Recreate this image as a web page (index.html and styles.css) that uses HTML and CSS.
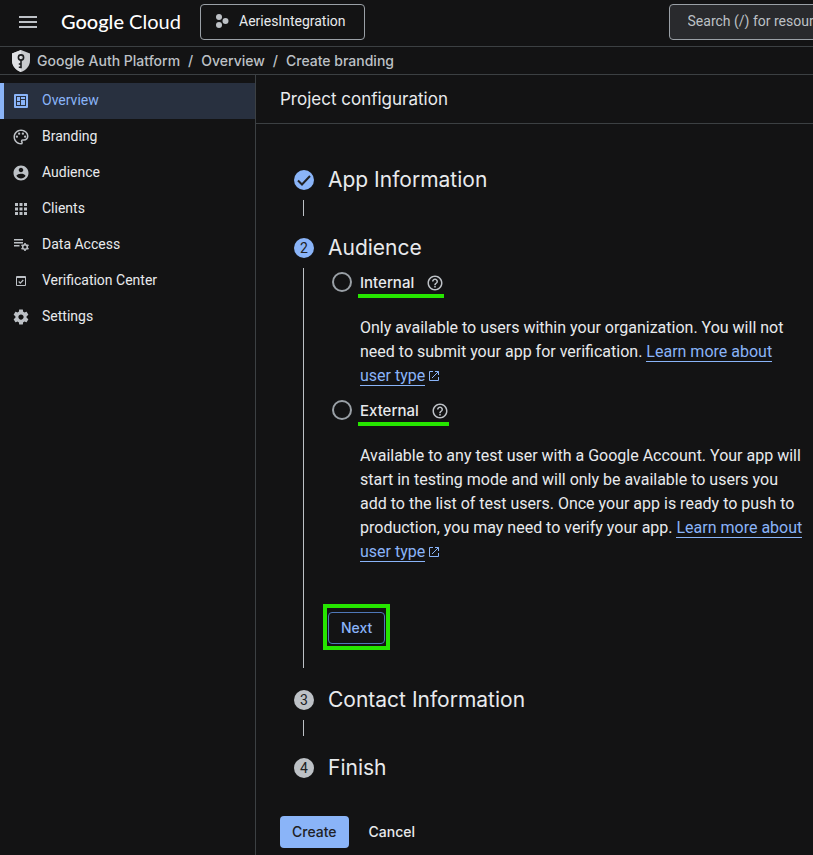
FILE: index.html
```html
<!DOCTYPE html>
<html lang="en">
<head>
<meta charset="utf-8">
<meta name="viewport" content="width=device-width, initial-scale=1">
<title>Create branding – Google Auth Platform</title>
<link rel="stylesheet" href="styles.css">
</head>
<body>
<svg class="sprite" aria-hidden="true">
  <symbol id="help" viewBox="0 0 24 24"><path d="M11 18h2v-2h-2v2zm1-16C6.480 2 2 6.480 2 12s4.480 10 10 10 10-4.480 10-10S17.520 2 12 2zm0 18c-4.410 0-8-3.590-8-8s3.590-8 8-8 8 3.590 8 8-3.590 8-8 8zm0-14c-2.210 0-4 1.790-4 4h2c0-1.100.9-2 2-2s2 .9 2 2c0 2-3 1.750-3 5h2c0-2.250 3-2.500 3-5 0-2.210-1.790-4-4-4z"/></symbol>
  <symbol id="open" viewBox="0 0 14 14"><path fill="none" stroke="currentColor" d="M6 2.500H2.500v9h9V8M8 2.500h3.500V6M11.500 2.500L5 9"/></symbol>
</svg>

<header class="topbar">
  <button class="menu" type="button" aria-label="Main menu">
    <svg viewBox="0 0 18 12"><path d="M0 0h18v2H0zM0 5h18v2H0zM0 10h18v2H0z"/></svg>
  </button>
  <a class="logo" href="#"><b>Google</b> Cloud</a>
  <button class="project" type="button">
    <svg viewBox="0 0 14 14"><circle cx="4" cy="3" r="3"/><circle cx="4" cy="11" r="3"/><circle cx="10.500" cy="7" r="3"/></svg>
    AeriesIntegration
  </button>
  <input class="search" type="search" aria-label="Search" placeholder="Search (/) for resources, docs, products, and more">
</header>

<nav class="crumbs" aria-label="Breadcrumb">
  <svg class="shield" viewBox="0 0 18 22">
    <path fill="#c9cbce" d="M9 0l9 3.500v7c0 5.200-3.700 9.900-9 11.500-5.300-1.600-9-6.300-9-11.500v-7z"/>
    <path fill="#dfe1e4" d="M9 0L0 3.500v7C0 15.700 3.700 20.400 9 22z"/>
    <circle cx="9" cy="7.500" r="2.600" fill="none" stroke="#1b1c1e" stroke-width="1.600"/>
    <path fill="none" stroke="#1b1c1e" stroke-width="1.600" d="M9 10v8.200M9 14H6.800M9 17.300H6.800"/>
  </svg>
  <a href="#">Google Auth Platform</a><span>/</span><a href="#">Overview</a><span>/</span><a href="#">Create branding</a>
</nav>

<div class="shell">
  <nav class="sidebar" aria-label="Google Auth Platform">
    <a class="item active" href="#">
      <svg viewBox="0 0 18 18"><path fill-rule="evenodd" d="M3 2h12a1 1 0 0 1 1 1v12a1 1 0 0 1-1 1H3a1 1 0 0 1-1-1V3a1 1 0 0 1 1-1zm1 2v10h10V4zM5 5h3v4H5zM9 5h4v2H9zM9 8h4v5H9zM5 10h3v3H5z"/></svg>
      Overview</a>
    <a class="item" href="#">
      <svg viewBox="0 0 24 24"><path d="M12 22C6.490 22 2 17.510 2 12S6.490 2 12 2s10 4.040 10 9c0 3.310-2.690 6-6 6h-1.770c-.28 0-.5.220-.5.500 0 .12.050.230.130.330.410.470.640 1.060.640 1.670A2.500 2.500 0 0 1 12 22zm0-18c-4.410 0-8 3.590-8 8s3.590 8 8 8c.28 0 .5-.22.500-.5a.54.540 0 0 0-.14-.35c-.41-.46-.63-1.050-.63-1.650a2.500 2.500 0 0 1 2.500-2.500H16c2.210 0 4-1.790 4-4 0-3.860-3.590-7-8-7z"/><circle cx="6.500" cy="11.500" r="1.500"/><circle cx="9.500" cy="7.500" r="1.500"/><circle cx="14.500" cy="7.500" r="1.500"/><circle cx="17.500" cy="11.500" r="1.500"/></svg>
      Branding</a>
    <a class="item" href="#">
      <svg viewBox="0 0 24 24"><path d="M12 2C6.480 2 2 6.480 2 12s4.480 10 10 10 10-4.480 10-10S17.520 2 12 2zm0 3c1.660 0 3 1.340 3 3s-1.340 3-3 3-3-1.340-3-3 1.340-3 3-3zm0 14.200c-2.500 0-4.710-1.280-6-3.220.03-1.990 4-3.080 6-3.080 1.990 0 5.970 1.090 6 3.080-1.290 1.940-3.500 3.220-6 3.220z"/></svg>
      Audience</a>
    <a class="item" href="#">
      <svg viewBox="0 0 18 18"><path d="M3 3h3v3H3zM7.500 3h3v3h-3zM12 3h3v3h-3zM3 7.500h3v3H3zM7.500 7.500h3v3h-3zM12 7.500h3v3h-3zM3 12h3v3H3zM7.500 12h3v3h-3zM12 12h3v3h-3z"/></svg>
      Clients</a>
    <a class="item" href="#">
      <svg viewBox="0 0 18 18"><path d="M2 3h9v1.500H2zM2 6h9v1.500H2zM2 9h5.500v1.500H2z"/><circle cx="13" cy="11" r="2.300" fill="none" stroke="currentColor" stroke-width="1.500"/><path fill="none" stroke="currentColor" stroke-width="1.600" d="M13 7v1.500M13 13.500V15M9.500 9l1.300.8M15.200 12.200l1.300.8M9.500 13l1.300-.8M15.200 9.800l1.300-.8"/></svg>
      Data Access</a>
    <a class="item" href="#">
      <svg viewBox="0 0 18 18"><path fill-rule="evenodd" d="M5 4h8a1 1 0 0 1 1 1v8a1 1 0 0 1-1 1H5a1 1 0 0 1-1-1V5a1 1 0 0 1 1-1zm0 2v7h8V6z"/><path fill="none" stroke="currentColor" stroke-width="1.200" d="M6.700 9.500l1.600 1.600 3-3.100"/></svg>
      Verification Center</a>
    <a class="item" href="#">
      <svg viewBox="0 0 24 24"><path d="M19.430 12.980c.04-.32.070-.64.070-.98s-.03-.66-.07-.98l2.110-1.650c.19-.15.240-.42.120-.64l-2-3.460c-.12-.22-.39-.3-.61-.22l-2.490 1c-.52-.4-1.080-.73-1.690-.98l-.38-2.650C14.460 2.180 14.250 2 14 2h-4c-.25 0-.46.180-.49.420l-.38 2.650c-.61.250-1.170.590-1.690.980l-2.490-1c-.23-.09-.49 0-.61.220l-2 3.460c-.13.220-.07.490.120.640l2.110 1.650c-.04.320-.07.650-.07.980s.03.660.070.980l-2.110 1.650c-.19.150-.24.420-.12.640l2 3.460c.12.220.390.300.610.220l2.490-1c.52.400 1.080.730 1.690.980l.38 2.650c.03.240.240.420.490.420h4c.25 0 .46-.18.490-.42l.38-2.650c.61-.25 1.170-.59 1.690-.98l2.490 1c.23.090.490 0 .61-.22l2-3.460c.12-.22.070-.49-.12-.64l-2.110-1.650zM12 15.500c-1.930 0-3.500-1.570-3.500-3.500s1.570-3.500 3.500-3.500 3.500 1.570 3.500 3.500-1.570 3.500-3.500 3.500z"/></svg>
      Settings</a>
  </nav>

  <main class="main">
    <h1 class="title">Project configuration</h1>
    <form class="stepper">
      <section class="step">
        <h2 class="head"><span class="dot done"><svg viewBox="0 0 20 20" role="img" aria-label="Done"><path d="M4 10.500l4 4 8-8.500"/></svg></span>App Information</h2>
        <div class="body"></div>
      </section>
      <section class="step">
        <h2 class="head"><span class="dot current">2</span>Audience</h2>
        <div class="body options">
          <div class="option">
            <input type="radio" name="audience" id="internal">
            <div class="name marked"><label for="internal">Internal</label><svg class="help" role="img" aria-label="Help"><use href="#help"/></svg></div>
            <p>Only available to users within your organization. You will not need to submit your app for verification. <a href="#">Learn more about user type</a><svg class="open" aria-hidden="true"><use href="#open"/></svg></p>
          </div>
          <div class="option">
            <input type="radio" name="audience" id="external">
            <div class="name marked"><label for="external">External</label><svg class="help" role="img" aria-label="Help"><use href="#help"/></svg></div>
            <p>Available to any test user with a Google Account. Your app will start in testing mode and will only be available to users you add to the list of test users. Once your app is ready to push to production, you may need to verify your app. <a href="#">Learn more about user type</a><svg class="open" aria-hidden="true"><use href="#open"/></svg></p>
          </div>
          <div class="highlight"><button class="next" type="button">Next</button></div>
        </div>
      </section>
      <section class="step">
        <h2 class="head"><span class="dot">3</span>Contact Information</h2>
        <div class="body"></div>
      </section>
      <section class="step">
        <h2 class="head"><span class="dot">4</span>Finish</h2>
      </section>
      <div class="actions">
        <button class="create" type="button">Create</button>
        <button class="cancel" type="button">Cancel</button>
      </div>
    </form>
  </main>
</div>
</body>
</html>
```
FILE: styles.css
```css
:root {
  --bg: #131314;
  --line: #3c4043;
  --text: #e8eaed;
  --muted: #bdc1c6;
  --blue: #8ab4f8;
  --mark: #26e600;
  --ui: Roboto, "Liberation Sans", sans-serif;
  --display: "Google Sans", Inter, Roboto, sans-serif;
}

* { box-sizing: border-box; }

body {
  margin: 0;
  min-height: 100vh;
  display: flex;
  flex-direction: column;
  overflow-x: hidden;
  background: var(--bg);
  color: var(--text);
  font: 14px/20px var(--ui);
}

button, input { font: inherit; color: inherit; }
button { cursor: pointer; }
a { color: inherit; text-decoration: none; }
svg { display: block; fill: currentColor; flex: none; }
.sprite { position: absolute; width: 0; height: 0; }

.topbar {
  display: flex;
  align-items: flex-start;
  height: 47px;
  padding: 4px 0 0 16px;
  overflow: hidden;
  border-bottom: 1px solid var(--line);
}
.menu {
  display: grid;
  place-items: center;
  flex: none;
  width: 24px;
  height: 36px;
  padding: 0;
  border: 0;
  background: none;
  color: var(--muted);
}
.menu svg { width: 18px; height: 12px; }
.logo {
  flex: 0 0 139px;
  margin-left: 21px;
  font: 20px/34px "Google Sans", Lato, sans-serif;
  color: #fff;
  white-space: nowrap;
}
.logo b { font-weight: 500; }
.project {
  display: flex;
  align-items: center;
  gap: 10px;
  flex: none;
  height: 36px;
  padding: 0 18px 2px 14px;
  border: 1px solid #9aa0a6;
  border-radius: 4px;
  background: none;
}
.project svg { width: 14px; height: 14px; color: var(--muted); }
.search {
  flex: 1 0 480px;
  height: 36px;
  margin-left: 304px;
  padding: 0 18px 2px;
  border: 1px solid #9aa0a6;
  border-radius: 4px;
  background: #292a2d;
  appearance: none;
}
.search::placeholder { color: var(--muted); opacity: 1; }

.crumbs {
  display: flex;
  align-items: center;
  gap: 8px;
  height: 28px;
  padding-left: 12px;
  border-bottom: 1px solid var(--line);
  font: 500 14px/20px var(--display);
  color: var(--muted);
}
.shield { width: 18px; height: 22px; margin-right: -1px; }

.shell { display: flex; flex: 1; }
.sidebar {
  flex: 0 0 256px;
  padding-top: 8px;
  border-right: 1px solid var(--line);
}
.item {
  display: flex;
  gap: 12px;
  height: 36px;
  padding: 0 8px;
  border-left: 4px solid transparent;
  line-height: 34px;
}
.item svg { width: 18px; height: 18px; margin-top: 9px; color: var(--muted); }
.item.active { border-color: var(--blue); background: #28303f; color: var(--blue); }
.item.active svg { color: var(--blue); }

.main { flex: 1; min-width: 0; }
.title {
  margin: 0;
  padding: 12px 24px;
  border-bottom: 1px solid var(--line);
  font: 17px/24px var(--display);
}

.stepper { padding: 24px 8px 7px 24px; }
.head {
  display: flex;
  align-items: center;
  gap: 14px;
  margin: 0;
  padding: 20px 0 8px 14px;
  font: 21px/24px var(--display);
}
.dot {
  display: grid;
  place-items: center;
  width: 20px;
  height: 20px;
  border-radius: 50%;
  background: var(--muted);
  color: #202124;
  font: 14px/20px var(--ui);
}
.dot.done, .dot.current { background: var(--blue); }
.dot svg { width: 20px; height: 20px; fill: none; stroke: #202124; stroke-width: 2; }
.body {
  min-height: 16px;
  margin-left: 23px;
  border-left: 1px solid var(--muted);
}

.options { padding: 4px 0 18px 19px; }
.option {
  display: grid;
  grid-template-columns: 20px 1fr;
  column-gap: 8px;
  padding-left: 9px;
}
.option input {
  appearance: none;
  width: 20px;
  height: 20px;
  margin: 0;
  border: 2px solid #9aa0a6;
  border-radius: 50%;
}
.option input:checked { border: 6px solid var(--blue); }
.name {
  display: flex;
  align-items: center;
  gap: 12px;
  justify-self: start;
  height: 26px;
  font: 500 15px/22px var(--display);
}
.marked { margin-left: -2px; padding-left: 2px; border-bottom: 4px solid var(--mark); }
.help { width: 18px; height: 18px; color: var(--muted); }
.option p {
  grid-column: 2;
  margin: 18px 0 12px;
  font-size: 16px;
  line-height: 24px;
}
.option p a { color: var(--blue); border-bottom: 1px solid var(--blue); }
.open { display: inline-block; width: 14px; height: 14px; margin-left: 2px; color: var(--blue); vertical-align: -2px; }

.highlight {
  display: flow-root;
  width: fit-content;
  margin-top: 28px;
  padding: 4px 1px 2px;
  border: 4px solid var(--mark);
}
.next, .create, .cancel {
  height: 32px;
  padding: 0 12px;
  border: 0;
  border-radius: 4px;
  background: none;
  font: 500 14px/20px var(--display);
}
.next { display: block; border: 1px solid #4f78b8; color: var(--blue); }

.actions { display: flex; gap: 8px; padding-top: 28px; }
.create { background: var(--blue); color: #202124; }
```
